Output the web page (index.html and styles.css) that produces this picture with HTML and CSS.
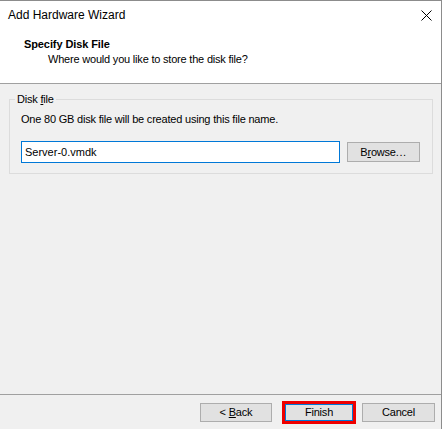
FILE: index.html
```html
<!DOCTYPE html>
<html>
<head>
<meta charset="utf-8">
<title>Add Hardware Wizard</title>
<link rel="stylesheet" href="styles.css">
</head>
<body>
<div class="window">
  <div class="titlebar">
    <span class="title">Add Hardware Wizard</span>
    <svg class="close" width="11" height="11" viewBox="0 0 11 11"><path d="M0.5 0.5L10.5 10.5M10.5 0.5L0.5 10.5" stroke="#000" stroke-width="1" fill="none"/></svg>
  </div>
  <div class="header">
    <div class="h-title">Specify Disk File</div>
    <div class="h-sub">Where would you like to store the disk file?</div>
  </div>
  <div class="content">
    <fieldset class="group">
      <legend class="legend">Disk <u>f</u>ile</legend>
      <p class="desc">One 80 GB disk file will be created using this file name.</p>
      <div class="filerow">
        <input class="path" type="text" value="Server-0.vmdk">
        <button class="btn browse" type="button">B<u>r</u>owse<span class="dots">...</span></button>
      </div>
    </fieldset>
  </div>
  <div class="footer">
    <button class="btn back" type="button">&lt; <u>B</u>ack</button>
    <button class="btn finish" type="button">Finish</button>
    <button class="btn cancel" type="button">Cancel</button>
  </div>
</div>
</body>
</html>
```

FILE: styles.css
```css
* { box-sizing: border-box; }
html, body {
  margin: 0;
  padding: 0;
}
body {
  width: 444px;
  height: 429px;
  background: #ffffff;
  font-family: "Liberation Sans", Arial, sans-serif;
  font-size: 11px;
  letter-spacing: -0.2px;
  color: #000;
  overflow: hidden;
}
.window {
  width: 442px;
  height: 429px;
  border-top: 1px solid #8c8c8c;
  border-right: 1px solid #8c8c8c;
  background: #f0f0f0;
  display: flex;
  flex-direction: column;
}
.titlebar {
  height: 29px;
  background: #fff;
  display: flex;
  align-items: center;
  justify-content: space-between;
  padding: 0 9px 0 8px;
}
.title {
  line-height: 15px;
  font-size: 12px;
  letter-spacing: 0;
}
.close { display: block; }
.header {
  height: 54px;
  background: #fff;
  border-bottom: 1px solid #a0a0a0;
  padding: 7px 0 0 24px;
}
.h-title {
  font-weight: bold;
  letter-spacing: -0.1px;
  line-height: 15px;
}
.h-sub {
  line-height: 15px;
  padding-left: 24px;
}
.content {
  flex: 1;
  padding: 8px 0 0 9px;
}
.group {
  width: 424px;
  margin: 0;
  border: 1px solid #dcdcdc;
  padding: 5px 12px 10px 11px;
}
.legend {
  padding: 0 2px;
  margin-left: -6px;
  line-height: 15px;
}
.desc {
  margin: 0;
  line-height: 15px;
}
.filerow {
  display: flex;
  align-items: center;
  gap: 7px;
  margin-top: 14px;
}
.path {
  width: 319px;
  height: 22px;
  border: 1px solid #0078d7;
  padding: 0 3px;
  margin: 0;
  font: inherit;
  letter-spacing: 0;
  color: #000;
  background: #fff;
  outline: none;
}
.btn {
  margin: 0;
  padding: 0;
  font: inherit;
  letter-spacing: -0.2px;
  color: #000;
  background: #e1e1e1;
  border: 1px solid #adadad;
  line-height: 15px;
}
.dots { letter-spacing: 0.6px; }
.browse {
  width: 73px;
  height: 20px;
}
.footer {
  height: 35px;
  border-top: 1px solid #a0a0a0;
  display: flex;
  justify-content: flex-end;
  align-items: center;
  gap: 9px;
  padding: 0 6px 0 0;
}
.back {
  width: 72px;
  height: 19px;
  margin-right: 4px;
}
.finish {
  width: 68px;
  height: 17px;
  border-color: #0078d7;
  outline: 3px solid #ee0000;
}
.cancel {
  width: 73px;
  height: 19px;
}
```
